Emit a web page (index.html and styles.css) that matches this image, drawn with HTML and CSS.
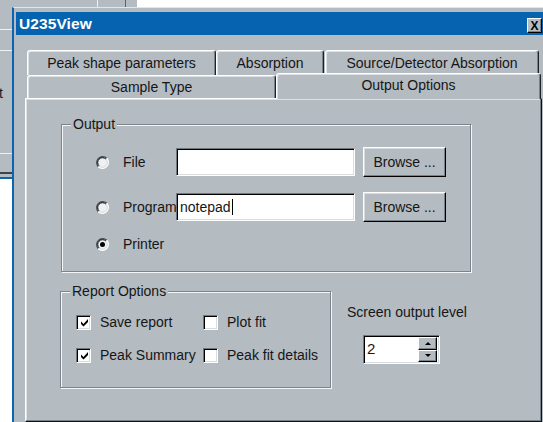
FILE: index.html
```html
<!DOCTYPE html>
<html>
<head>
<meta charset="utf-8">
<title>U235View</title>
<link rel="stylesheet" href="styles.css">
</head>
<body>
<!-- shared control glyphs -->
<svg class="defs" width="0" height="0" aria-hidden="true">
  <defs>
    <symbol id="radio-ring" viewBox="0 0 13 13">
      <circle cx="6.5" cy="6.5" r="6" fill="#eef0f2"/>
      <path d="M2.26 10.74 A6 6 0 0 1 10.74 2.26" stroke="#3e454b" stroke-width="1.2" fill="none"/>
      <path d="M10.74 2.26 A6 6 0 0 1 2.26 10.74" stroke="#ffffff" stroke-width="1.2" fill="none"/>
      <path d="M3.1 9.9 A4.8 4.8 0 0 1 9.9 3.1" stroke="#000000" fill="none"/>
      <path d="M9.9 3.1 A4.8 4.8 0 0 1 3.1 9.9" stroke="#d6dadd" fill="none"/>
    </symbol>
    <symbol id="check-mark" viewBox="0 0 9 9">
      <path d="M1 3.5 L3.5 6 L8 1 L8 4 L3.5 8.5 L1 6 Z" fill="#000"/>
    </symbol>
  </defs>
</svg>

<div class="desk">
  <!-- window lying behind the dialog -->
  <div class="backwin">
    <div class="bw-white-top"></div>
    <div class="bw-vline bw-vline-a"></div>
    <div class="bw-vline bw-vline-b"></div>
    <div class="bw-hline bw-h1"></div>
    <div class="bw-hline bw-h2"></div>
    <span class="bw-text">t</span>
    <div class="bw-hline bw-h3"></div>
    <div class="bw-dline"></div>
    <div class="bw-list"></div>
  </div>

  <div class="dialog">
    <div class="titlebar">
      <span class="title">U235View</span>
      <span class="close">X</span>
    </div>

    <div class="tabs">
      <div class="tabrow">
        <div class="tab t-peak">Peak shape parameters</div>
        <div class="tab t-abs">Absorption</div>
        <div class="tab t-src">Source/Detector Absorption</div>
      </div>
      <div class="tabrow front">
        <div class="tab t-sample">Sample Type</div>
        <div class="tab t-output active">Output Options</div>
      </div>
    </div>

    <div class="panel">
      <div class="group out-group">
        <span class="group-label">Output</span>
        <div class="out-row">
          <span class="radio"><svg width="13" height="13"><use href="#radio-ring"/></svg></span>
          <span class="lbl">File</span>
          <span class="edit"></span>
          <span class="btn">Browse ...</span>
        </div>
        <div class="out-row">
          <span class="radio"><svg width="13" height="13"><use href="#radio-ring"/></svg></span>
          <span class="lbl">Program</span>
          <span class="edit"><span class="caret">notepad</span></span>
          <span class="btn">Browse ...</span>
        </div>
        <div class="out-row short">
          <span class="radio on"><svg width="13" height="13"><use href="#radio-ring"/></svg></span>
          <span class="lbl">Printer</span>
        </div>
      </div>

      <div class="lower">
        <div class="group rep-group">
          <span class="group-label">Report Options</span>
          <div class="chk-grid">
            <span class="chk"><svg width="9" height="9"><use href="#check-mark"/></svg></span>
            <span>Save report</span>
            <span class="chk"></span>
            <span>Plot fit</span>
            <span class="chk"><svg width="9" height="9"><use href="#check-mark"/></svg></span>
            <span>Peak Summary</span>
            <span class="chk"></span>
            <span>Peak fit details</span>
          </div>
        </div>

        <div class="level">
          <div class="level-label">Screen output level</div>
          <div class="spin">
            <span class="spin-value">2</span>
            <span class="spin-btns">
              <span class="spin-btn up"></span>
              <span class="spin-btn down"></span>
            </span>
          </div>
        </div>
      </div>
    </div>
  </div>
</div>
</body>
</html>
```

FILE: styles.css
```css
* {
  box-sizing: border-box;
}

html, body {
  margin: 0;
  padding: 0;
}

body {
  width: 543px;
  height: 422px;
  overflow: hidden;
  background: #b4bbc1;
  font-family: "Liberation Sans", Arial, sans-serif;
  font-size: 14px;
  color: #161616;
}

.defs {
  position: absolute;
  width: 0;
  height: 0;
}

.desk {
  position: relative;
  width: 543px;
  height: 422px;
  overflow: hidden;
}

/* ---------- background window ---------- */
.backwin > * {
  position: absolute;
}

.bw-white-top {
  left: 137px;
  top: 0;
  width: 406px;
  height: 7px;
  background: #ffffff;
}

.bw-vline {
  top: 0;
  width: 1px;
  height: 7px;
}

.bw-vline-a {
  left: 97px;
  background: #eef0f2;
}

.bw-vline-b {
  left: 125px;
  background: #5c636a;
}

.bw-hline {
  left: 0;
  width: 12px;
  height: 1px;
  background: #eef0f2;
}

.bw-h1 { top: 29px; }
.bw-h2 { top: 50px; }
.bw-h3 { top: 153px; }

.bw-text {
  left: -1px;
  top: 85px;
  line-height: 16px;
}

.bw-dline {
  left: 0;
  top: 172px;
  width: 12px;
  height: 2px;
  background: #3d4348;
}

.bw-list {
  left: 0;
  top: 177px;
  width: 13px;
  height: 245px;
  background: #ffffff;
  border-top: 2px solid #0a64b0;
}

/* ---------- dialog ---------- */
.dialog {
  position: absolute;
  left: 12px;
  top: 7px;
  width: 538px;
  height: 420px;
  background: #b4bbc1;
  border-left: 2px solid #0a64b0;
  border-top: 1px solid #e2e6e9;
  padding-top: 4px;
}

.titlebar {
  margin-left: 2px;
  width: 530px;
  height: 23px;
  background: #0563b0;
  display: flex;
  align-items: center;
  padding-left: 3px;
}

.title {
  color: #ffffff;
  font-weight: bold;
  font-size: 15.5px;
  letter-spacing: 0.1px;
}

.close {
  margin-left: auto;
  margin-right: 4px;
  align-self: flex-end;
  margin-bottom: 2px;
  width: 15px;
  height: 15px;
  background: #b4bbc1;
  border: 1px solid;
  border-color: #ffffff #000000 #000000 #ffffff;
  box-shadow: inset -1px -1px 0 #7b838a;
  display: flex;
  align-items: center;
  justify-content: center;
  font-weight: bold;
  font-size: 12px;
  line-height: 1;
  color: #000;
}

/* ---------- tabs ---------- */
.tabs {
  margin-top: 15px;
  margin-left: 13px;
}

.tabrow {
  display: flex;
  align-items: flex-end;
  height: 25px;
}

.tabrow.front {
  height: 23px;
}

.tab {
  height: 25px;
  background: #b4bbc1;
  border-top: 1px solid #ffffff;
  border-left: 1px solid #ffffff;
  border-right: 1px solid #1e2226;
  box-shadow: inset -1px 0 0 #7b838a, inset 1px 1px 0 #dde1e4;
  border-radius: 3px 3px 0 0;
  display: flex;
  align-items: center;
  justify-content: center;
  white-space: nowrap;
  padding-bottom: 1px;
}

.t-peak { width: 189px; }
.t-abs { width: 108px; }
.t-src { width: 214px; margin-left: 1px; }

.t-sample {
  width: 249px;
  height: 23px;
  padding-bottom: 0;
}

.t-output {
  width: 265px;
  height: 26px;
  margin-bottom: -1px;
  padding-bottom: 4px;
}

.tab.active {
  position: relative;
  z-index: 1;
}

/* ---------- page panel ---------- */
.panel {
  margin-left: 11px;
  width: 517px;
  height: 324px;
  border-top: 1px solid #ffffff;
  border-left: 1px solid #ffffff;
  border-right: 1px solid #0e1114;
  border-bottom: 1px solid #0e1114;
  box-shadow: inset -1px -1px 0 #7b838a, inset 1px 1px 0 #dde1e4;
  padding-top: 25px;
}

.group {
  position: relative;
  border: 1px solid #7d858c;
  box-shadow: inset 1px 1px 0 #f4f6f7, 1px 1px 0 #f4f6f7;
}

.group-label {
  position: absolute;
  top: -9px;
  left: 9px;
  padding: 0 2px;
  line-height: 16px;
  background: #b4bbc1;
  white-space: nowrap;
}

.out-group {
  margin-left: 35px;
  width: 410px;
  height: 148px;
  padding: 22px 0 0 34px;
}

.out-row {
  display: flex;
  align-items: center;
  height: 30px;
  margin-bottom: 15px;
}

.out-row.short {
  height: 24px;
  margin-top: -5px;
}

.radio {
  position: relative;
  width: 13px;
  height: 13px;
  margin-right: 14px;
  flex: none;
  display: block;
}

.radio svg {
  display: block;
}

.radio.on::after {
  content: "";
  position: absolute;
  left: 4px;
  top: 4px;
  width: 5px;
  height: 5px;
  border-radius: 50%;
  background: #000;
}

.lbl {
  width: 53px;
  white-space: nowrap;
  flex: none;
}

.edit {
  width: 179px;
  height: 28px;
  background: #ffffff;
  border: 1px solid;
  border-color: #6f777e #ffffff #ffffff #6f777e;
  box-shadow: inset 1px 1px 0 #000000, inset -1px -1px 0 #d9dde0;
  padding-left: 3px;
  display: flex;
  align-items: center;
  flex: none;
}

.caret {
  padding-right: 1px;
  border-right: 1px solid #000;
  line-height: 16px;
}

.btn {
  margin-left: 8px;
  width: 83px;
  height: 30px;
  border: 1px solid;
  border-color: #ffffff #000000 #000000 #ffffff;
  box-shadow: inset -1px -1px 0 #7b838a, inset 1px 1px 0 #d8dce0;
  display: flex;
  align-items: center;
  justify-content: center;
  padding-bottom: 1px;
  flex: none;
}

/* ---------- lower section ---------- */
.lower {
  display: flex;
  margin-top: 19px;
}

.rep-group {
  margin-left: 34px;
  width: 271px;
  height: 97px;
  padding: 21px 0 0 15px;
  flex: none;
}

.chk-grid {
  display: grid;
  grid-template-columns: 15px 94px 15px auto;
  grid-auto-rows: 18px;
  column-gap: 9px;
  row-gap: 15px;
  align-items: center;
  white-space: nowrap;
}

.chk {
  width: 15px;
  height: 15px;
  background: #ffffff;
  border: 1px solid;
  border-color: #6f777e #ffffff #ffffff #6f777e;
  box-shadow: inset 1px 1px 0 #000000, inset -1px -1px 0 #d9dde0;
  display: flex;
  align-items: center;
  justify-content: center;
  padding: 1px 0 0 1px;
}

.chk svg {
  display: block;
}

.level {
  margin-left: 16px;
  padding-top: 13px;
}

.level-label {
  line-height: 16px;
  white-space: nowrap;
}

.spin {
  margin-top: 15px;
  margin-left: 16px;
  width: 77px;
  height: 29px;
  background: #ffffff;
  border: 1px solid;
  border-color: #6f777e #ffffff #ffffff #6f777e;
  box-shadow: inset 1px 1px 0 #000000, inset -1px -1px 0 #d9dde0;
  display: flex;
  align-items: center;
  padding: 2px 2px 2px 3px;
}

.spin-value {
  flex: 1;
  font-size: 15px;
  padding-bottom: 2px;
}

.spin-btns {
  display: flex;
  flex-direction: column;
  width: 19px;
  height: 25px;
}

.spin-btn {
  flex: 1;
  background: #b4bbc1;
  border: 1px solid;
  border-color: #ffffff #000000 #000000 #ffffff;
  box-shadow: inset -1px -1px 0 #7b838a;
  display: flex;
  align-items: center;
  justify-content: center;
}

.spin-btn::after {
  content: "";
  width: 0;
  height: 0;
  border-left: 3px solid transparent;
  border-right: 3px solid transparent;
}

.spin-btn.up::after {
  border-bottom: 3px solid #000;
}

.spin-btn.down::after {
  border-top: 3px solid #000;
}
```
